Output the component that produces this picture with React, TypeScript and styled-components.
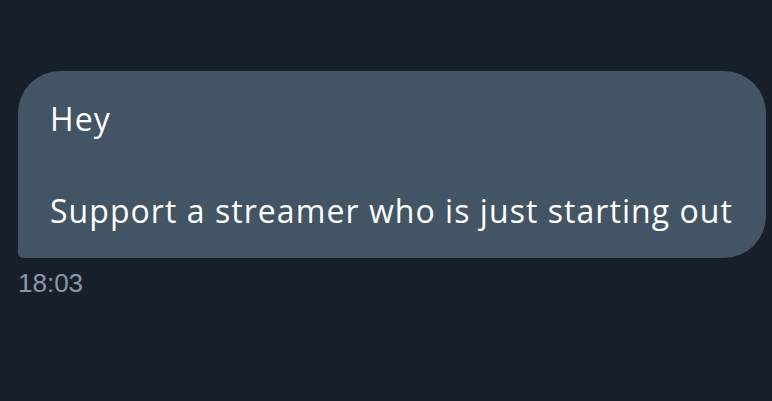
import React from 'react';
import styled, { createGlobalStyle } from "styled-components";

const GlobalStyle = createGlobalStyle`
  html, body {
    margin: 0;
    padding: 0;
    background: #17202a;
  }
`;

const App = () => {
  return (
    <>
      <GlobalStyle/>
      <Thread>
        <Message>
          <Bubble>{"Hey\n\nSupport a streamer who is just starting out"}</Bubble>
          <Time>18:03</Time>
        </Message>
      </Thread>
    </>
  );
};

const Thread = styled.div`
  width: 772px;
  height: 401px;
  box-sizing: border-box;
  padding: 71px 0 0 18px;
  background: #17202a;
  overflow: hidden;
`;

const Message = styled.div`
  display: flex;
  flex-direction: column;
  align-items: flex-start;
`;

const Bubble = styled.div`
  padding: 25px 33px 24px 32px;
  border-radius: 42px 42px 42px 5px;
  background: #435464;
  color: #ffffff;
  font-family: "Open Sans", sans-serif;
  font-size: 32px;
  letter-spacing: 1.05px;
  line-height: 46px;
  white-space: pre-wrap;
`;

const Time = styled.div`
  margin-top: 10px;
  color: #8b98a5;
  font-family: "Liberation Sans", Arial, sans-serif;
  font-size: 26px;
`;

export default App;
